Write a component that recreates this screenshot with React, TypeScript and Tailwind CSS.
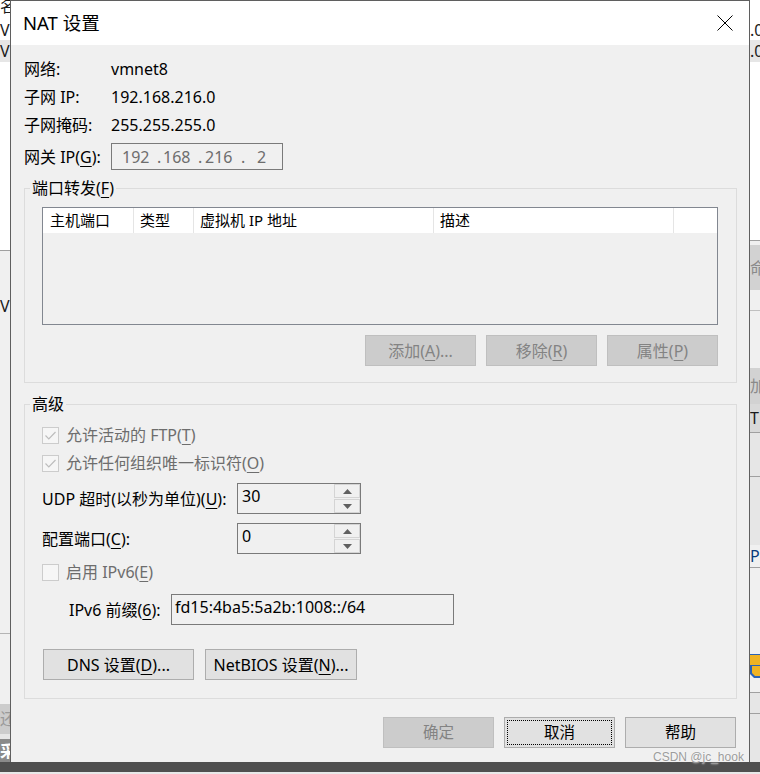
import React from 'react';

function U({ children }: { children: React.ReactNode }) {
  return <span className="underline decoration-1 underline-offset-[3px]">{children}</span>;
}

function Check({ checked }: { checked: boolean }) {
  return (
    <div className="flex h-[17px] w-[17px] items-center justify-center border border-[#cccccc] bg-[#f6f6f6]">
      {checked && (
        <svg width="13" height="11" viewBox="0 0 13 11">
          <path d="M1.5 5.5L4.8 8.8L11.5 2" fill="none" stroke="#bdbdbd" strokeWidth="1.2" />
        </svg>
      )}
    </div>
  );
}

function Arrow({ up }: { up?: boolean }) {
  return (
    <svg width="9" height="5" viewBox="0 0 9 5">
      <path d={up ? 'M0 5L4.5 0L9 5Z' : 'M0 0L4.5 5L9 0Z'} fill="#606060" />
    </svg>
  );
}

function Spin({ value }: { value: string }) {
  return (
    <div className="flex h-[31px] w-[124px] border border-[#7a7a7a] bg-[#f0f0f0]">
      <div className="flex-1 pl-[4px] text-[16px] leading-[24px] text-black">{value}</div>
      <div className="flex w-[26px] flex-col gap-[1px]">
        <div className="flex flex-1 items-center justify-center border border-[#d4d4d4] bg-[#f0f0f0]">
          <Arrow up />
        </div>
        <div className="flex flex-1 items-center justify-center border border-[#d4d4d4] bg-[#f0f0f0]">
          <Arrow />
        </div>
      </div>
    </div>
  );
}

function Btn({
  children,
  className = '',
  disabled,
  focus,
}: {
  children: React.ReactNode;
  className?: string;
  disabled?: boolean;
  focus?: boolean;
}) {
  return (
    <div
      className={`relative flex h-[31px] items-center justify-center border ${
        disabled ? 'border-[#bfbfbf] bg-[#cccccc] text-[#838383]' : 'border-[#adadad] bg-[#e1e1e1] text-black'
      } ${className}`}
    >
      {focus && <div className="absolute inset-[2px] border border-dotted border-black" />}
      {children}
    </div>
  );
}

function Group({ label, className, children }: { label: React.ReactNode; className: string; children: React.ReactNode }) {
  return (
    <div className={`relative border border-[#dcdcdc] ${className}`}>
      <span className="absolute left-[5px] top-[-12px] bg-[#f0f0f0] px-[2px] text-[16px] leading-[22px] text-black">
        {label}
      </span>
      {children}
    </div>
  );
}

function LeftStrip() {
  return (
    <div className="flex w-[10px] flex-col overflow-hidden whitespace-nowrap text-[16px] leading-none text-[#1a1a1a]">
      <div className="h-[20px] bg-white leading-[12px]">名</div>
      <div className="flex h-[20px] items-center bg-white">Vl</div>
      <div className="flex h-[22px] items-center bg-[#e6e6e6]">Vl</div>
      <div className="h-[188px] bg-white" />
      <div className="h-[1px] bg-[#a0a0a0]" />
      <div className="h-[45px] bg-[#f0f0f0]" />
      <div className="flex h-[20px] items-center bg-[#f0f0f0]">Vl</div>
      <div className="h-[317px] bg-[#f0f0f0]" />
      <div className="h-[1px] bg-[#b4b4b4]" />
      <div className="h-[70px] bg-[#f0f0f0]" />
      <div className="flex h-[30px] items-center bg-[#cccccc] text-[#9a9a9a]">还</div>
      <div className="h-[5px] bg-[#e6e6e6]" />
      <div className="flex h-[23px] items-center bg-[#8a8a8a] font-bold text-white">采</div>
    </div>
  );
}

function RightStrip() {
  return (
    <div className="flex w-[10px] flex-col overflow-hidden whitespace-nowrap text-[16px] leading-none text-[#1a1a1a]">
      <div className="h-[20px] bg-white" />
      <div className="flex h-[20px] items-center bg-white">.0</div>
      <div className="flex h-[22px] items-center bg-[#e6e6e6]">.0</div>
      <div className="h-[178px] bg-white" />
      <div className="h-[1px] bg-[#a0a0a0]" />
      <div className="h-[4px] bg-[#f0f0f0]" />
      <div className="flex h-[45px] items-center bg-[#d2d2d2] text-[#8a8a8a]">命</div>
      <div className="h-[20px] bg-[#f0f0f0]" />
      <div className="h-[1px] bg-[#c0c0c0]" />
      <div className="h-[57px] bg-[#f0f0f0]" />
      <div className="flex h-[36px] items-center bg-[#d2d2d2] text-[#8a8a8a]">加</div>
      <div className="flex h-[28px] items-center bg-[#d9d9d9]">T</div>
      <div className="h-[1px] bg-[#a0a0a0]" />
      <div className="h-[43px] bg-[#e6e6e6]" />
      <div className="h-[1px] bg-[#a0a0a0]" />
      <div className="h-[68px] bg-[#e6e6e6]" />
      <div className="flex h-[22px] items-center bg-[#f0f0f0] text-[#0a3a7a]">P</div>
      <div className="h-[1px] bg-[#a0a0a0]" />
      <div className="h-[85px] bg-[#f0f0f0]" />
      <div className="flex h-[26px] items-center bg-[#f0f0f0]">
        <svg width="10" height="24" viewBox="0 0 10 24">
          <path d="M0 0H10V24H4L0 20Z" fill="#2b63b5" />
          <path d="M0 1H10V11H0Z" fill="#f0b323" />
          <path d="M2 12H10V22H5L2 19Z" fill="#f0b323" />
        </svg>
      </div>
      <div className="h-[13px] bg-[#f0f0f0]" />
      <div className="h-[1px] bg-[#a0a0a0]" />
      <div className="h-[20px] bg-[#e6e6e6]" />
      <div className="h-[1px] bg-[#a0a0a0]" />
      <div className="flex-1 bg-[#e6e6e6]" />
    </div>
  );
}

export default function App() {
  return (
    <div className="relative flex h-[774px] w-[760px] flex-col overflow-hidden bg-[#e8e8e8] font-['Noto_Sans','Noto_Sans_CJK_SC',sans-serif]">
      <div className="flex h-[762px]">
        <LeftStrip />
        <div className="flex w-[740px] flex-col border-x border-t border-[#5f5f5f] bg-[#f0f0f0]">
          <div className="flex h-[44px] items-center justify-between bg-white pl-[12px] pr-[16px]">
            <span className="text-[18.5px] leading-none text-black">NAT 设置</span>
            <svg width="16" height="16" viewBox="0 0 16 16">
              <path d="M0.5 0.5L15.5 15.5M15.5 0.5L0.5 15.5" stroke="#000" strokeWidth="1" />
            </svg>
          </div>

          <div className="flex flex-col pl-[13px] pt-[10px] text-[16px] text-black">
            <div className="flex h-[28px] items-center">
              <span className="w-[87px]">网络:</span>
              <span>vmnet8</span>
            </div>
            <div className="flex h-[28px] items-center">
              <span className="w-[87px]">子网 IP:</span>
              <span>192.168.216.0</span>
            </div>
            <div className="flex h-[28px] items-center">
              <span className="w-[87px]">子网掩码:</span>
              <span>255.255.255.0</span>
            </div>
            <div className="mt-[4px] flex h-[27px] items-center">
              <span className="w-[87px]">
                网关 IP(<U>G</U>):
              </span>
              <div className="flex h-[27px] w-[172px] items-center border border-[#7a7a7a] text-[#6d6d6d]">
                <span className="w-[45px] pl-[10px]">192</span>
                <span className="w-[6px]">.</span>
                <span className="w-[35px]">168</span>
                <span className="w-[7px]">.</span>
                <span className="w-[36px]">216</span>
                <span className="w-[16px]">.</span>
                <span>2</span>
              </div>
            </div>

            <Group
              label={
                <>
                  端口转发(<U>F</U>)
                </>
              }
              className="mt-[18px] h-[195px] w-[713px] pl-[17px] pt-[18px]"
            >
              <div className="flex h-[118px] w-[676px] flex-col border border-[#828790] bg-[#f0f0f0]">
                <div className="flex h-[25px] bg-white text-[15px] leading-[25px]">
                  <div className="w-[91px] border-r border-[#e5e5e5] pl-[7px]">主机端口</div>
                  <div className="w-[60px] border-r border-[#e5e5e5] pl-[6px]">类型</div>
                  <div className="w-[240px] border-r border-[#e5e5e5] pl-[6px]">虚拟机 IP 地址</div>
                  <div className="w-[240px] border-r border-[#e5e5e5] pl-[6px]">描述</div>
                  <div className="flex-1" />
                </div>
              </div>
              <div className="mt-[10px] flex w-[676px] justify-end gap-[10px]">
                <Btn disabled className="w-[111px]">
                  添加(<U>A</U>)...
                </Btn>
                <Btn disabled className="w-[111px]">
                  移除(<U>R</U>)
                </Btn>
                <Btn disabled className="w-[111px]">
                  属性(<U>P</U>)
                </Btn>
              </div>
            </Group>

            <Group label="高级" className="mt-[21px] h-[295px] w-[713px] pl-[17px] pt-[16px]">
              <div className="flex h-[28px] items-center">
                <Check checked />
                <span className="ml-[7px] text-[#6d6d6d]">
                  允许活动的 FTP(<U>T</U>)
                </span>
              </div>
              <div className="flex h-[28px] items-center">
                <Check checked />
                <span className="ml-[7px] text-[#6d6d6d]">
                  允许任何组织唯一标识符(<U>O</U>)
                </span>
              </div>
              <div className="mt-[6px] flex h-[31px] items-center">
                <span className="w-[195px]">
                  UDP 超时(以秒为单位)(<U>U</U>):
                </span>
                <Spin value="30" />
              </div>
              <div className="mt-[9px] flex h-[31px] items-center">
                <span className="w-[195px]">
                  配置端口(<U>C</U>):
                </span>
                <Spin value="0" />
              </div>
              <div className="mt-[4px] flex h-[28px] items-center">
                <Check checked={false} />
                <span className="ml-[7px] text-[#6d6d6d]">
                  启用 IPv6(<U>E</U>)
                </span>
              </div>
              <div className="mt-[8px] flex h-[31px] items-center pl-[27px]">
                <span className="w-[102px]">
                  IPv6 前缀(<U>6</U>):
                </span>
                <div className="h-[31px] w-[283px] border border-[#7a7a7a] pl-[3px] leading-[24px]">
                  fd15:4ba5:5a2b:1008::/64
                </div>
              </div>
              <div className="mt-[24px] flex gap-[11px] pl-[1px]">
                <Btn className="w-[151px]">
                  DNS 设置(<U>D</U>)...
                </Btn>
                <Btn className="w-[152px]">
                  NetBIOS 设置(<U>N</U>)...
                </Btn>
              </div>
            </Group>
          </div>

          <div className="mt-[18px] flex justify-end gap-[10px] pr-[13px] text-[15.5px]">
            <Btn disabled className="w-[111px]">
              确定
            </Btn>
            <Btn focus className="w-[111px]">
              取消
            </Btn>
            <Btn className="w-[111px]">帮助</Btn>
          </div>
        </div>
        <RightStrip />
      </div>
      <div className="h-[10px] bg-[#4f4f4f]" />
      <div className="flex-1 bg-[#e8e8e8]" />

      <span className="absolute left-[653px] top-[749px] font-['Liberation_Sans',sans-serif] text-[12px] leading-[16px] text-[#9c9c9c] [text-shadow:0_0_2px_#fff]">
        CSDN @jc_hook
      </span>
    </div>
  );
}
